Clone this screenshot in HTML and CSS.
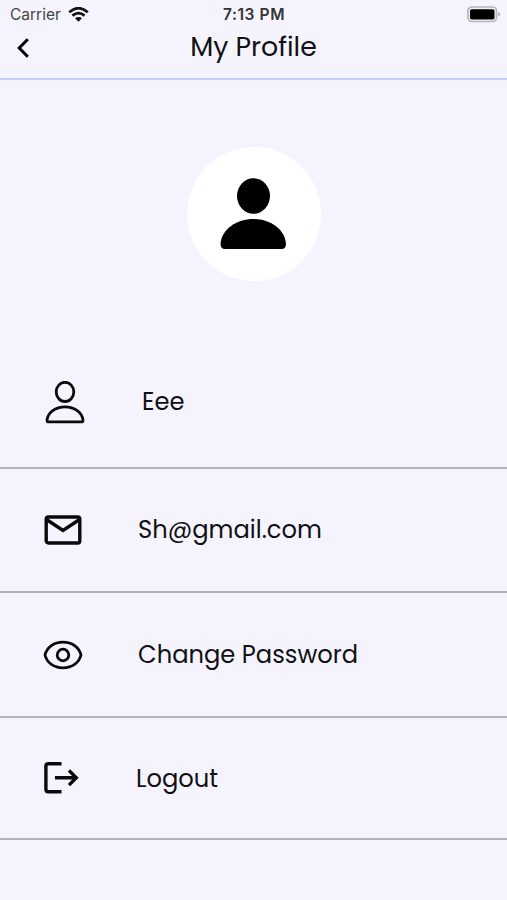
FILE: index.html
```html
<!DOCTYPE html>
<html lang="en">
<head>
  <meta charset="UTF-8">
  <meta name="viewport" content="width=device-width, initial-scale=1.0">
  <title>My Profile</title>
  <link rel="stylesheet" href="styles.css">
</head>
<body>
  <header class="header">
    <div class="status-bar">
      <div class="carrier">
        <span>Carrier</span>
        <svg class="wifi" width="21" height="15" viewBox="0 0 21 15">
          <path d="M1.2 5.2Q10.5-2.8 19.8 5.2M4.4 8.6Q10.5 3.5 16.6 8.6" fill="none" stroke="#111" stroke-width="2.7"/>
          <path d="M7 11.3Q10.5 8.7 14 11.3L10.5 14.7Z" fill="#111"/>
        </svg>
      </div>
      <div class="time">7:13 PM</div>
      <svg class="battery" width="34" height="17" viewBox="0 0 34 17">
        <rect x="1" y="1" width="28.5" height="14.5" rx="4" fill="#f5f4fe" stroke="#b5b5b8" stroke-width="1.7"/>
        <rect x="3" y="3.2" width="24.5" height="10.3" rx="1.8" fill="#000"/>
        <path d="M31.2 6v4.6q1.8-.7 1.8-2.3T31.2 6z" fill="#aaa"/>
      </svg>
    </div>
    <div class="title-bar">
      <svg class="back" width="14" height="22" viewBox="0 0 14 22">
        <path d="M11.8 2.2L3.2 11l8.6 8.8" fill="none" stroke="#000" stroke-width="3"/>
      </svg>
      <h1>My Profile</h1>
    </div>
  </header>

  <main>
    <div class="avatar">
      <svg width="68" height="72" viewBox="0 0 68 72">
        <ellipse cx="33.5" cy="18" rx="16.5" ry="17.8"/>
        <path d="M5 71Q.5 71 .5 66C1.5 51 17 41 33.5 41S65 51 66 66Q66 71 61.5 71Z"/>
      </svg>
    </div>

    <ul class="menu">
      <li class="row row-name">
        <svg class="icon" width="42" height="44" viewBox="0 0 42 44">
          <ellipse cx="21" cy="10.9" rx="8.8" ry="9.6"/>
          <path d="M4.5 40.9Q2.9 40.9 3 39.2C3.8 31.7 11.5 25.8 21 25.8S38.2 31.7 39 39.2Q39.1 40.9 37.5 40.9Z"/>
        </svg>
        <span>Eee</span>
      </li>
      <li class="row row-email">
        <svg class="icon icon-bold" width="42" height="44" viewBox="0 0 42 44">
          <rect x="4.2" y="9" width="33.6" height="26" rx="2.2"/>
          <path d="M4.5 11.5l16.5 11 16.5-11"/>
        </svg>
        <span>Sh@gmail.com</span>
      </li>
      <li class="row row-password">
        <svg class="icon" width="42" height="44" viewBox="0 0 42 44">
          <path d="M3 22C5 14 12 9.2 21 9.2S37 14 39 22C37 30 30 34.8 21 34.8S5 30 3 22Z"/>
          <circle cx="21" cy="22" r="5.8"/>
        </svg>
        <span>Change Password</span>
      </li>
      <li class="row row-logout">
        <svg class="icon icon-bold" width="42" height="44" viewBox="0 0 42 44">
          <path d="M19.5 7.8H6.2Q3.9 7.8 3.9 10.3V33.2Q3.9 35.7 6.2 35.7H19.5M13 21.8H34M27 14.5l7.3 7.3L27 29.1"/>
        </svg>
        <span>Logout</span>
      </li>
    </ul>
  </main>
</body>
</html>
```
FILE: styles.css
```css
* {
  box-sizing: border-box;
}

body {
  margin: 0;
  min-height: 100vh;
  background: #f5f4fe;
  color: #111;
  font-family: Poppins, Inter, "Liberation Sans", sans-serif;
}

svg {
  display: block;
  flex-shrink: 0;
}

.header {
  height: 80px;
  border-bottom: 2px solid #c3cdf7;
}

.status-bar {
  display: grid;
  grid-template-columns: 1fr auto 1fr;
  align-items: center;
  height: 29px;
  padding: 0 6px 0 10px;
  font-family: Inter, "Liberation Sans", sans-serif;
  font-size: 15.5px;
}

.carrier {
  display: flex;
  align-items: center;
  gap: 7px;
  color: #444;
}

.time {
  margin-right: 3px;
  color: #333;
  font-weight: 600;
  letter-spacing: 0.6px;
}

.battery {
  justify-self: end;
}

.title-bar {
  display: grid;
  grid-template-columns: 40px 1fr 40px;
  align-items: center;
  height: 37px;
}

.back {
  margin-left: 16px;
}

h1 {
  margin: 0;
  padding-bottom: 2px;
  font-size: 26.8px;
  font-weight: 400;
  line-height: 35px;
  text-align: center;
}

.avatar {
  display: flex;
  align-items: center;
  justify-content: center;
  width: 134px;
  height: 134px;
  margin: 67px auto 57px;
  border-radius: 50%;
  background: #fff;
}

.menu {
  margin: 0;
  padding: 0;
  list-style: none;
}

.row {
  display: flex;
  align-items: center;
  height: 125px;
  padding-left: 42px;
  border-bottom: 2px solid #b3b2b9;
  font-size: 24.2px;
}

.row-name {
  height: 131px;
  padding-left: 44px;
  gap: 56px;
}

.row-email,
.row-password {
  gap: 54px;
}

.row-email {
  height: 124px;
}

.row-name span,
.row-email span {
  padding-bottom: 2px;
}

.row-logout {
  height: 122px;
  gap: 52px;
}

.icon {
  fill: none;
  stroke: #0a0a0a;
  stroke-width: 2.8;
}

.icon-bold {
  stroke-width: 3.4;
}
```
